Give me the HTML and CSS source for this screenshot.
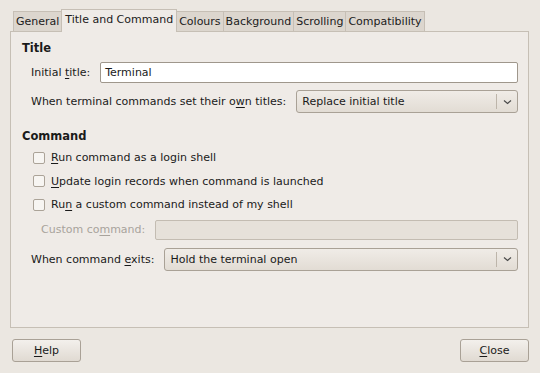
FILE: index.html
```html
<!DOCTYPE html>
<html lang="en">
<head>
    <meta charset="UTF-8">
    <title>Profile Preferences</title>
    <link rel="stylesheet" href="styles.css">
</head>
<body>
    <div class="dialog">
        <div class="tabs">
            <div class="tab">General</div>
            <div class="tab active">Title and Command</div>
            <div class="tab">Colours</div>
            <div class="tab">Background</div>
            <div class="tab">Scrolling</div>
            <div class="tab">Compatibility</div>
        </div>

        <div class="page">
            <h3>Title</h3>
            <div class="row">
                <span class="label">Initial <u>t</u>itle:</span>
                <div class="entry">Terminal</div>
            </div>
            <div class="row">
                <span class="label">When terminal commands set their o<u>w</u>n titles:</span>
                <div class="combo"><span>Replace initial title</span><span class="arrow"><svg width="9" height="6" viewBox="0 0 9 6"><path d="M1 1.5 L4.5 4.5 L8 1.5" fill="none" stroke="#4a4a4a" stroke-width="1.2"/></svg></span></div>
            </div>

            <h3 class="second">Command</h3>
            <div class="check"><span class="box"></span><span><u>R</u>un command as a login shell</span></div>
            <div class="check"><span class="box"></span><span><u>U</u>pdate login records when command is launched</span></div>
            <div class="check"><span class="box"></span><span>Ru<u>n</u> a custom command instead of my shell</span></div>
            <div class="row indent">
                <span class="label disabled">Custom co<u>m</u>mand:</span>
                <div class="entry off"></div>
            </div>
            <div class="row">
                <span class="label">When command <u>e</u>xits:</span>
                <div class="combo"><span>Hold the terminal open</span><span class="arrow"><svg width="9" height="6" viewBox="0 0 9 6"><path d="M1 1.5 L4.5 4.5 L8 1.5" fill="none" stroke="#4a4a4a" stroke-width="1.2"/></svg></span></div>
            </div>
        </div>

        <div class="buttons">
            <button class="btn help"><u>H</u>elp</button>
            <button class="btn close"><u>C</u>lose</button>
        </div>
    </div>
</body>
</html>
```

FILE: styles.css
```css
body {
    margin: 0;
    background-color: #ebe7e1;
    font-family: "DejaVu Sans", sans-serif;
    font-size: 11px;
    color: #1a1a1a;
}
u {
    text-decoration: underline;
    text-underline-offset: 2px;
}
.dialog {
    width: 540px;
    height: 373px;
    padding: 10px 11px 0 10px;
    box-sizing: border-box;
}
.tabs {
    display: flex;
    padding-left: 3px;
    height: 21px;
    align-items: flex-end;
}
.tab {
    height: 19px;
    line-height: 19px;
    padding: 0 2px;
    background-color: #dcd6ce;
    border: 1px solid #c6bfb5;
    border-bottom: none;
    margin-right: -1px;
    color: #202020;
}
.tab.active {
    height: 22px;
    line-height: 20px;
    background-color: #efebe7;
    position: relative;
    z-index: 1;
    margin-bottom: -1px;
    padding: 0 3px;
}
.page {
    height: 297px;
    background-color: #efebe7;
    border: 1px solid #c6bfb5;
    box-sizing: border-box;
    padding: 9px 10px 0 9px;
}
h3 {
    font-size: 11.5px;
    font-weight: bold;
    margin: 0 0 6px 2px;
    line-height: 15px;
}
h3.second {
    margin-top: 16px;
    margin-bottom: 2px;
}
.row {
    display: flex;
    align-items: center;
    gap: 10px;
    padding-left: 11px;
    margin-bottom: 7px;
}
.row.indent {
    padding-left: 21px;
    margin-top: 3px;
    margin-bottom: 8px;
}
.label {
    white-space: nowrap;
}
.label.disabled {
    color: #a8a39c;
}
.entry {
    flex: 1;
    height: 21px;
    line-height: 19px;
    background-color: #ffffff;
    border: 1px solid #9f978c;
    border-radius: 2px;
    padding: 0 4px;
    box-sizing: border-box;
}
.entry.off {
    background-color: #e6e1da;
    border-color: #c3bcb2;
    height: 20px;
}
.combo {
    flex: 1;
    display: flex;
    align-items: center;
    justify-content: space-between;
    height: 23px;
    border: 1px solid #a9a196;
    border-radius: 3px;
    background: linear-gradient(#f0ece7, #e2dcd4);
    box-sizing: border-box;
    padding-left: 5px;
}
.arrow {
    display: flex;
    align-items: center;
    justify-content: center;
    width: 20px;
    height: 15px;
    border-left: 1px solid #bdb5aa;
}
.check {
    display: flex;
    align-items: center;
    gap: 6px;
    padding-left: 13px;
    height: 23.5px;
}
.box {
    width: 10px;
    height: 10px;
    border: 1px solid #aba398;
    border-radius: 2px;
    background-color: #f7f5f2;
}
.buttons {
    display: flex;
    justify-content: space-between;
    margin-top: 11px;
}
.btn {
    font-family: "DejaVu Sans", sans-serif;
    font-size: 11px;
    color: #1a1a1a;
    height: 23px;
    border: 1px solid #a9a196;
    border-radius: 3px;
    background: linear-gradient(#f3f0ec, #e0dad2);
    padding: 0;
}
.btn.help {
    width: 69px;
    margin-left: 2px;
}
.btn.close {
    width: 69px;
}
```
